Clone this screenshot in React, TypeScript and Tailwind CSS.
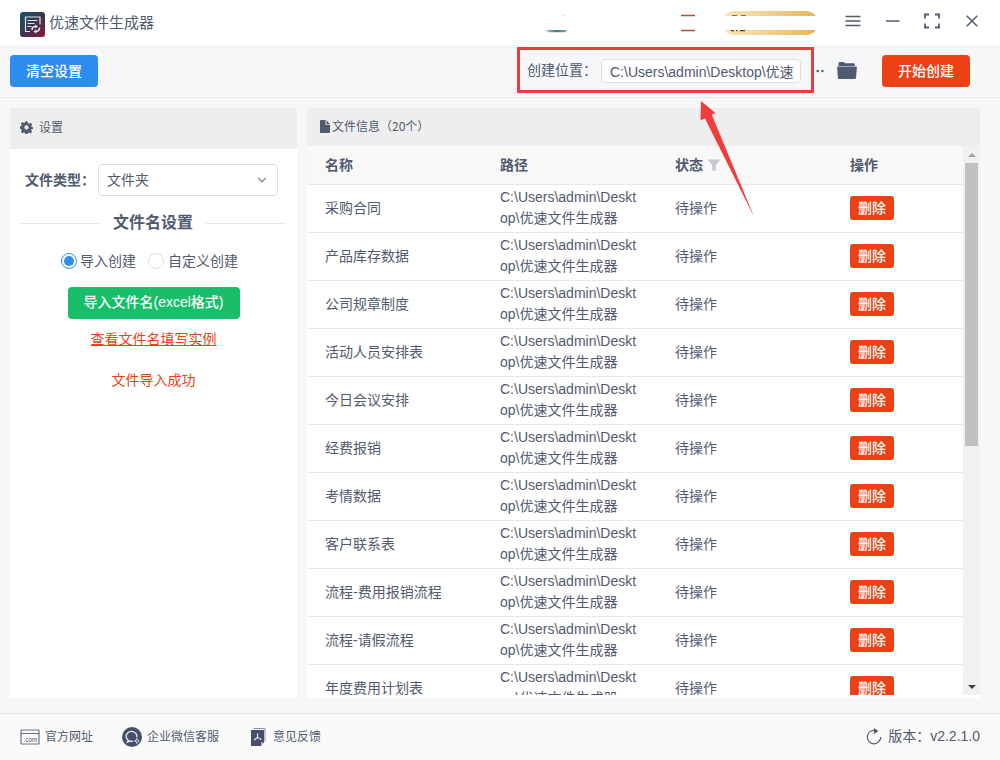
import type { ReactNode } from "react"
import { ChevronDown } from "lucide-react"

const files = [
  "采购合同",
  "产品库存数据",
  "公司规章制度",
  "活动人员安排表",
  "今日会议安排",
  "经费报销",
  "考情数据",
  "客户联系表",
  "流程-费用报销流程",
  "流程-请假流程",
  "年度费用计划表",
]

const savePath = "C:\\Users\\admin\\Desktop\\优速文件生成器"

function Logo() {
  return (
    <svg width="25" height="25" viewBox="0 0 25 25" fill="none">
      <defs>
        <linearGradient id="logoBg" x1="0" y1="0" x2="1" y2="1">
          <stop offset="0" stopColor="#17566a" />
          <stop offset="0.5" stopColor="#3b3550" />
          <stop offset="1" stopColor="#8a1838" />
        </linearGradient>
      </defs>
      <rect width="25" height="25" rx="3" fill="url(#logoBg)" />
      <path d="M5.500 19.500V5H20v7.500M5 19.500h5" stroke="#dfe5ea" strokeWidth="1.2" />
      <path d="M7.500 8.500h10M7.500 11.500h7M7.500 14.500h4" stroke="#dfe5ea" strokeWidth="1.2" />
      <path d="M12 18c0-2.300 1.500-3.400 3.500-3.400M19.500 15.500c0 2.400-1.500 4-3.800 4" stroke="#dfe5ea" strokeWidth="1.500" />
      <path d="M15 12.600l3 2-3 1.900zM16.300 17.600l-3 1.900 3 1.900z" fill="#dfe5ea" />
    </svg>
  )
}

function HeaderBadges() {
  return (
    <svg width="280" height="30" viewBox="0 0 280 30" fill="none">
      <defs>
        <linearGradient id="vipBg" x1="0" y1="0" x2="1" y2="0">
          <stop offset="0" stopColor="#f8e7bd" />
          <stop offset="0.45" stopColor="#f0d394" />
          <stop offset="1" stopColor="#e9b54d" />
        </linearGradient>
        <linearGradient id="tealBg" x1="0" y1="0" x2="1" y2="0">
          <stop offset="0" stopColor="#a5c9c9" />
          <stop offset="0.5" stopColor="#3d8288" />
          <stop offset="1" stopColor="#71a3a8" />
        </linearGradient>
      </defs>
      <path d="M5 25h22l-2 2.300H9z" fill="url(#tealBg)" />
      <path d="M21 10l4 .6" stroke="#dce8e8" />
      <path d="M141 10.500h14M141 25.500h14" stroke="#c04a3c" strokeWidth="1.300" />
      <rect x="182" y="6" width="96" height="24" rx="12" fill="url(#vipBg)" />
      <path d="M192 10.500h5M201 10.500h5" stroke="#8a6a3c" strokeWidth="1.200" />
      <path d="M191 25.500h3M196 25.500h1.500M200 25.500h5" stroke="#4d3b22" strokeWidth="1.400" />
      <rect x="178" y="11" width="102" height="14" fill="#fff" />
    </svg>
  )
}

function SettingIcon() {
  return (
    <svg width="13" height="13" viewBox="0 0 24 24" fill="#515a6e">
      <path
        fillRule="evenodd"
        d="M9.800 1h4.400l.6 3 2 .9 2.600-1.700 3.100 3.100-1.700 2.600.8 2 2.400.5v3.400l-2.700.5-.7 2 1.700 2.600-3 3-2.600-1.700-2 .9-.5 2.400H9.800l-.6-2.700-2-.8-2.500 1.700-3.100-3 1.600-2.600-.8-2L0 14.400V9.800l2.500-.4.8-2-1.700-2.600 3-3 2.600 1.700 2-.9zM12 8a4 4 0 1 0 0 8 4 4 0 0 0 0-8z"
      />
    </svg>
  )
}

function DocIcon() {
  return (
    <svg width="10" height="13" viewBox="0 0 11 13" preserveAspectRatio="none" fill="#515a6e">
      <path d="M1 0h5v4.800h5V12a1 1 0 0 1-1 1H1a1 1 0 0 1-1-1V1a1 1 0 0 1 1-1z" />
      <path d="M7 .3l3.800 3.600H7z" />
    </svg>
  )
}

function FolderIcon() {
  return (
    <svg width="20" height="17" viewBox="0 0 20 17" fill="#515a6e">
      <path d="M1.500 4V1.300Q1.500 0 2.800 0h4l1.200 1.300h8.500q1.300 0 1.300 1.300V4z" />
      <path d="M1 4.500h18q1 0 .9 1L19 16q-.1 1-1 1H2q-.9 0-1-1L.1 5.500q-.1-1 .9-1z" />
    </svg>
  )
}

function WindowControls() {
  return (
    <div className="flex items-center text-[#515a6e]">
      <svg width="16" height="12" viewBox="0 0 16 12" stroke="currentColor" strokeWidth="1.500">
        <path d="M.5 1.500h15M.5 6h15M.5 10.500h15" />
      </svg>
      <svg className="ml-[25px]" width="14" height="12" viewBox="0 0 14 12" stroke="currentColor" strokeWidth="1.500">
        <path d="M0 6h13.500" />
      </svg>
      <svg className="ml-[23px]" width="17" height="16" viewBox="0 0 17 16" fill="none" stroke="currentColor" strokeWidth="1.800">
        <path d="M2 5.500V1.500h4M12 1.500h4v4M16 10.500v4h-4M6 14.500H2v-4" />
      </svg>
      <svg className="ml-[26px]" width="12" height="12" viewBox="0 0 12 12" stroke="currentColor" strokeWidth="1.500">
        <path d="M.7.7l10.600 10.600M11.300.7L.7 11.300" />
      </svg>
    </div>
  )
}

function WebsiteIcon() {
  return (
    <svg width="20" height="16" viewBox="0 0 20 16" fill="none" stroke="#6b7385">
      <rect x="1" y="1" width="18" height="14" rx="0.500" strokeWidth="1.200" />
      <path d="M1 4.500h18" />
      <text x="10.500" y="12.500" textAnchor="middle" stroke="none" fill="#515a6e" className="font-['Liberation_Sans'] text-[6.500px]">
        .com
      </text>
    </svg>
  )
}

function ServiceIcon() {
  return (
    <svg width="20" height="20" viewBox="0 0 20 20" fill="none">
      <circle cx="10" cy="10" r="10" fill="#46506a" />
      <path d="M14.800 10.500a5.400 5 0 1 0-3.800 3.700M6.300 13l-.9 2.200 2.600-1" stroke="#e9ebef" strokeWidth="1.300" />
      <path d="M14.800 11.600v1.600M14.800 14.800v1.600M12.400 14h1.600M15.600 14h1.600" stroke="#e9ebef" strokeWidth="1.400" />
    </svg>
  )
}

function FeedbackIcon() {
  return (
    <svg width="15" height="18" viewBox="0 0 15 18" fill="none">
      <path d="M2.500.5h11.500v13" stroke="#8b91a0" />
      <path d="M0 2h13v12.500L10 18H0z" fill="#46506a" />
      <path d="M6.500 5.500v4L3 12M6.500 9.500l4 2" stroke="#e9ebef" strokeWidth="1.200" />
      <path d="M10 18v-3.500h3" fill="#c3c7cf" />
    </svg>
  )
}

function FooterLink({ icon, label, className }: { icon: ReactNode; label: string; className: string }) {
  return (
    <div className={`flex items-center text-xs ${className}`}>
      {icon}
      <span>{label}</span>
    </div>
  )
}

function TitleBar() {
  return (
    <header className="h-[45px] shrink-0 bg-white flex items-center pl-5 pr-[22px]">
      <div className="pt-[3px]">
        <Logo />
      </div>
      <span className="ml-1 text-[15px] leading-none">优速文件生成器</span>
      <div className="ml-auto mr-[25px] pb-[5px]">
        <HeaderBadges />
      </div>
      <div className="pb-[3px]">
        <WindowControls />
      </div>
    </header>
  )
}

function Toolbar() {
  return (
    <div className="h-[53px] shrink-0 border-b border-[#e8eaec] flex items-center pl-2.5 pr-[30px]">
      <button className="h-8 w-[88px] rounded bg-[#2d8cf0] text-white text-sm font-medium">清空设置</button>
      <div className="relative mb-0.5 ml-auto flex h-[46px] w-[297px] items-center border-[3px] border-[#e83e3e] pl-[7px]">
        <span className="w-[74px] shrink-0 text-sm">创建位置：</span>
        <div className="mt-0.5 h-6 w-[200px] overflow-hidden whitespace-nowrap rounded-sm border border-[#dcdee2] bg-white pl-2 text-sm leading-6">
          C:\Users\admin\Desktop\优速
        </div>
        {/* arrow pointing at the save location */}
        <svg className="absolute left-[179px] top-[50px] z-10" width="64" height="124" viewBox="0 0 64 124" fill="#f33b3b">
          <path d="M2 1l14.500 12-3.800 1.600L55.500 117.800 6 18.500l-4.500 1.800z" />
        </svg>
      </div>
      <svg className="ml-0.5" width="10" height="4" viewBox="0 0 10 4" fill="#515a6e">
        <circle cx="1.700" cy="2" r="1.200" />
        <circle cx="6.500" cy="2" r="1.200" />
      </svg>
      <div className="ml-[11px] mr-[25px] pb-px">
        <FolderIcon />
      </div>
      <button className="h-8 w-[88px] rounded bg-[#ed4014] text-white text-sm font-medium">开始创建</button>
    </div>
  )
}

function SettingsPanel() {
  return (
    <aside className="w-[287px] shrink-0 bg-white">
      <div className="flex h-[41px] items-center gap-[6px] bg-[#eeeeee] pb-0.5 pl-2.5 text-xs">
        <SettingIcon />
        <span>设置</span>
      </div>
      <div className="flex items-center pl-[15px] pt-[15px]">
        <span className="w-[73px] shrink-0 text-sm font-bold">文件类型：</span>
        <div className="flex h-8 w-[180px] items-center justify-between rounded border border-[#dcdee2] pl-2 pr-2 text-sm">
          <span>文件夹</span>
          <ChevronDown size={14} color="#808695" />
        </div>
      </div>
      <div className="mt-[15px] flex items-center pl-2.5 pr-[11px]">
        <div className="h-px flex-1 bg-[#e8eaec]" />
        <span className="px-[13px] text-base leading-6 font-bold">文件名设置</span>
        <div className="h-px flex-1 bg-[#e8eaec]" />
      </div>
      <div className="mt-4 flex h-5 items-center pl-[51px] text-sm">
        <span className="flex size-4 items-center justify-center rounded-full border border-[#2d8cf0]">
          <span className="size-2.5 rounded-full bg-[#2d8cf0]" />
        </span>
        <span className="ml-[3px]">导入创建</span>
        <span className="ml-3 size-4 rounded-full border border-[#dcdee2]" />
        <span className="ml-1">自定义创建</span>
      </div>
      <div className="mt-4 flex flex-col items-center text-sm">
        <button className="h-8 w-[172px] rounded bg-[#19be6b] pb-0.5 text-white font-medium">导入文件名(excel格式)</button>
        <a className="mt-2.5 leading-5 text-[#ed4014] underline">查看文件名填写实例</a>
        <p className="mt-[21px] leading-5 text-[#ed4014]">文件导入成功</p>
      </div>
    </aside>
  )
}

function FileTable() {
  return (
    <section className="flex w-[673px] shrink-0 flex-col bg-white pb-[3px]">
      <div className="flex h-[38px] shrink-0 items-center gap-0.5 bg-[#eeeeee] pb-0.5 pl-[13px] text-xs">
        <DocIcon />
        <span className="font-['Noto_Sans_CJK_SC',sans-serif]">文件信息（20个）</span>
      </div>
      <div className="flex min-h-0 flex-1">
        <div className="w-[656px] overflow-hidden">
          <div className="grid h-[39px] grid-cols-[175px_175px_175px_131px] items-center border-b border-[#e8eaec] bg-[#f8f8f9] text-sm font-bold">
            <span className="pl-[18px]">名称</span>
            <span className="pl-[18px]">路径</span>
            <span className="flex items-center gap-1 pl-[18px]">
              状态
              <svg width="14" height="12" viewBox="0 0 14 12" fill="#c5c8ce">
                <path d="M.5.500h13L8.800 6v5.500H5.200V6z" />
              </svg>
            </span>
            <span className="pl-[18px]">操作</span>
          </div>
          {files.map((name) => (
            <div
              key={name}
              className="grid h-12 grid-cols-[175px_175px_175px_131px] items-center border-b border-[#e8eaec] pb-[2px] text-sm"
            >
              <span className="pl-[18px]">{name}</span>
              <span className="break-all pl-[18px] pr-[18px] leading-[21px]">{savePath}</span>
              <span className="pl-[18px]">待操作</span>
              <span className="flex pl-[18px]">
                <button className="h-6 w-11 rounded-[3px] bg-[#ed4014] text-sm font-medium text-white">删除</button>
              </span>
            </div>
          ))}
        </div>
        <div className="flex w-[17px] flex-col items-center bg-[#f1f1f1]">
          <div className="flex h-[17px] items-center">
            <svg width="8" height="4" viewBox="0 0 8 4" fill="#a3a3a3">
              <path d="M0 4l4-4 4 4z" />
            </svg>
          </div>
          <div className="h-[283px] w-[13px] bg-[#c1c1c1]" />
          <div className="mt-auto flex h-[17px] items-center">
            <svg width="8" height="4" viewBox="0 0 8 4" fill="#404040">
              <path d="M0 0h8L4 4z" />
            </svg>
          </div>
        </div>
      </div>
    </section>
  )
}

export default function App() {
  return (
    <div className="flex h-[760px] w-[1000px] flex-col overflow-hidden bg-[#f5f7f9] font-['Liberation_Sans','Noto_Sans_CJK_SC',sans-serif] text-[#515a6e]">
      <TitleBar />
      <Toolbar />
      <main className="flex h-[600px] shrink-0 gap-2.5 pl-2.5 pt-2.5">
        <SettingsPanel />
        <FileTable />
      </main>
      <footer className="mt-[15px] flex flex-1 items-center border-t border-[#e8eaec] bg-[#fafafa] pl-5 pr-5">
        <FooterLink className="gap-[5px]" icon={<WebsiteIcon />} label="官方网址" />
        <FooterLink className="ml-[29px] gap-[5px]" icon={<ServiceIcon />} label="企业微信客服" />
        <FooterLink className="ml-8 gap-[7px]" icon={<FeedbackIcon />} label="意见反馈" />
        <div className="ml-auto flex items-center pb-0.5 text-sm">
          <svg width="16" height="17" viewBox="0 0 16 17" fill="none">
            <path d="M9 2.500A6.700 6.700 0 1 0 14.700 9" stroke="#515a6e" strokeWidth="1.200" />
            <path d="M8 0l4.500 3L8 6z" fill="#515a6e" />
          </svg>
          <span className="ml-1.5">版本：</span>
          <span>v2.2.1.0</span>
        </div>
      </footer>
    </div>
  )
}
